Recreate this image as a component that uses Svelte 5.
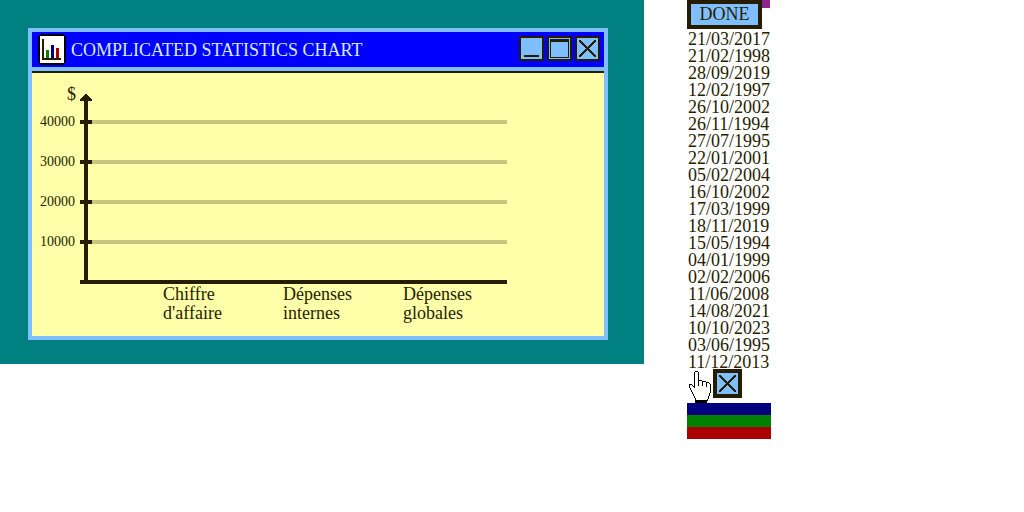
<script>
  const ticks = [40000, 30000, 20000, 10000];
  const categories = [['Chiffre', "d'affaire"], ['Dépenses', 'internes'], ['Dépenses', 'globales']];
  const dates = [
    '21/03/2017', '21/02/1998', '28/09/2019', '12/02/1997', '26/10/2002',
    '26/11/1994', '27/07/1995', '22/01/2001', '05/02/2004', '16/10/2002',
    '17/03/1999', '18/11/2019', '15/05/1994', '04/01/1999', '02/02/2006',
    '11/06/2008', '14/08/2021', '10/10/2023', '03/06/1995', '11/12/2013'
  ];
</script>

{#snippet cross()}
  <svg width="17" height="17" viewBox="0 0 17 17" shape-rendering="crispEdges" aria-hidden="true">
    <path d="M1 1L16 16M16 1L1 16" stroke="#261c00" stroke-width="2" stroke-linecap="square" />
  </svg>
{/snippet}

<main>
  <section class="desktop">
    <article class="window">
      <header>
        <svg class="app-icon" width="28" height="31" viewBox="0 0 28 31" shape-rendering="crispEdges" aria-hidden="true">
          <path d="M2 0H26V2H28V29H26V31H2V29H0V2H2Z" fill="#000" />
          <path d="M2 2H26V29H2Z" fill="#fffffa" />
          <path d="M4 5H6V24H23V26H4Z" fill="#261c00" />
          <path d="M8 16H11V24H8Z" fill="#008000" />
          <path d="M13 11H16V24H13Z" fill="#000080" />
          <path d="M18 14H21V24H18Z" fill="#aa0000" />
        </svg>
        <h1>COMPLICATED STATISTICS CHART</h1>
        <div class="controls">
          <button class="control" aria-label="Minimize">
            <svg width="19" height="19" viewBox="0 0 19 19" shape-rendering="crispEdges"><path d="M2 16H17V18H2Z" fill="#261c00" /></svg>
          </button>
          <button class="control" aria-label="Maximize">
            <svg width="19" height="19" viewBox="0 0 19 19" shape-rendering="crispEdges"><path d="M0 0H19V19H0ZM1 3V18H18V3Z" fill="#261c00" fill-rule="evenodd" /></svg>
          </button>
          <button class="control" aria-label="Close">{@render cross()}</button>
        </div>
      </header>
      <div class="chart">
        <div class="scale">
          <span class="unit">$</span>
          {#each ticks as tick}<span class="tick">{tick}</span>{/each}
        </div>
        <div class="plot">
          <svg class="arrow" width="12" height="7" viewBox="0 0 12 7" shape-rendering="crispEdges" aria-hidden="true">
            <path d="M5 0H7V1H8V2H9V3H10V4H11V5H12V7H0V5H1V4H2V3H3V2H4V1H5Z" fill="#261c00" />
          </svg>
          <div class="grid">
            {#each ticks as tick}<div class="line"></div>{/each}
          </div>
          <div class="categories">
            {#each categories as [first, second]}
              <span>{first}<br />{second}</span>
            {/each}
          </div>
        </div>
      </div>
    </article>
  </section>

  <aside>
    <div class="top">
      <button class="done">DONE</button>
      <i class="swatch"></i>
    </div>
    <ul>
      {#each dates as date}<li>{date}</li>{/each}
    </ul>
    <div class="tools">
      <svg class="hand" width="22" height="32" viewBox="0 0 22 32" shape-rendering="crispEdges" aria-hidden="true">
        <path d="M6 29H18V32H6Z" fill="#000" />
        <path d="M6 0H9V1H10V9H13V10H17V11H20V12H21V13H22V22H21V25H20V28H19V30H6V27H5V25H4V23H3V21H2V19H1V17H0V13H3V14H4V15H5V1H6Z" fill="#000" />
        <path d="M6 1H9V10H13V11H17V12H20V13H21V22H20V25H19V28H18V29H7V27H6V25H5V23H4V21H3V19H2V17H1V14H3V15H4V16H5V17H6Z" fill="#fffffa" />
        <path d="M9 9H10V15H9ZM13 10H14V15H13ZM17 11H18V16H17Z" fill="#000" />
      </svg>
      <button class="remove" aria-label="Close">{@render cross()}</button>
    </div>
    <div class="stripe navy"></div>
    <div class="stripe green"></div>
    <div class="stripe red"></div>
  </aside>
</main>

<style>
  :global(body) { margin: 0; background: #fff; }
  * { box-sizing: border-box; }
  main {
    --ink: #261c00;
    --sky: #80bfff;
    display: flex;
    align-items: flex-start;
    gap: 43px;
    color: var(--ink);
    font: 18px/17px "Liberation Serif", serif;
  }
  svg { display: block; flex: none; }
  button {
    display: grid;
    place-items: center;
    padding: 0;
    border: 2px solid var(--ink);
    border-radius: 0;
    background: var(--sky);
    color: var(--ink);
    font: inherit;
  }
  .desktop { flex: 0 1 644px; padding: 28px 36px 24px 28px; background: #008080; }
  .window { border: 4px solid var(--sky); background: #ffffaa; }
  header {
    display: flex;
    align-items: center;
    height: 39px;
    padding: 0 4px 0 6px;
    border-bottom: 4px solid var(--sky);
    background: #0000ff;
  }
  h1 { flex: 1; margin: 0 0 0 5px; padding-top: 2px; color: #d5eaff; font: inherit; }
  .controls { display: flex; gap: 3px; margin-bottom: 2px; }
  .control { width: 25px; height: 25px; }
  .chart { display: flex; border-top: 2px solid var(--ink); padding: 12px 97px 13px 0; }
  .scale { display: flex; flex-direction: column; flex: none; width: 44px; margin-right: 4px; text-align: right; }
  .unit { height: 17px; line-height: 19px; }
  .tick { height: 40px; padding-right: 1px; font-size: 14px; line-height: 40px; }
  .plot { flex: 1; padding-top: 9px; }
  .grid {
    display: flex;
    flex-direction: column;
    gap: 36px;
    padding: 19px 0 36px;
    border-bottom: 4px solid var(--ink);
    background: linear-gradient(var(--ink), var(--ink)) 4px 0 / 4px 100% no-repeat;
  }
  .line { height: 4px; background: linear-gradient(to right, var(--ink) 12px, #c8c67e 12px); }
  .categories { display: grid; grid-template-columns: 120px 120px 1fr; padding: 1px 0 0 83px; line-height: 19px; }
  aside { width: 84px; }
  .top { display: flex; align-items: flex-start; }
  .done { width: 75px; height: 29px; border-width: 4px; }
  .swatch { width: 8px; height: 8px; background: #8e248e; }
  ul { margin: 0 0 -2px; padding: 2px 0 0 1px; list-style: none; }
  .tools { display: flex; gap: 2px; height: 34px; padding-left: 2px; }
  .hand { margin-top: 2px; }
  .remove { position: relative; width: 29px; height: 29px; border-width: 4px; }
  .stripe { height: 12px; }
  .navy { background: #000080; }
  .green { background: #008000; }
  .red { background: #aa0000; }
</style>
